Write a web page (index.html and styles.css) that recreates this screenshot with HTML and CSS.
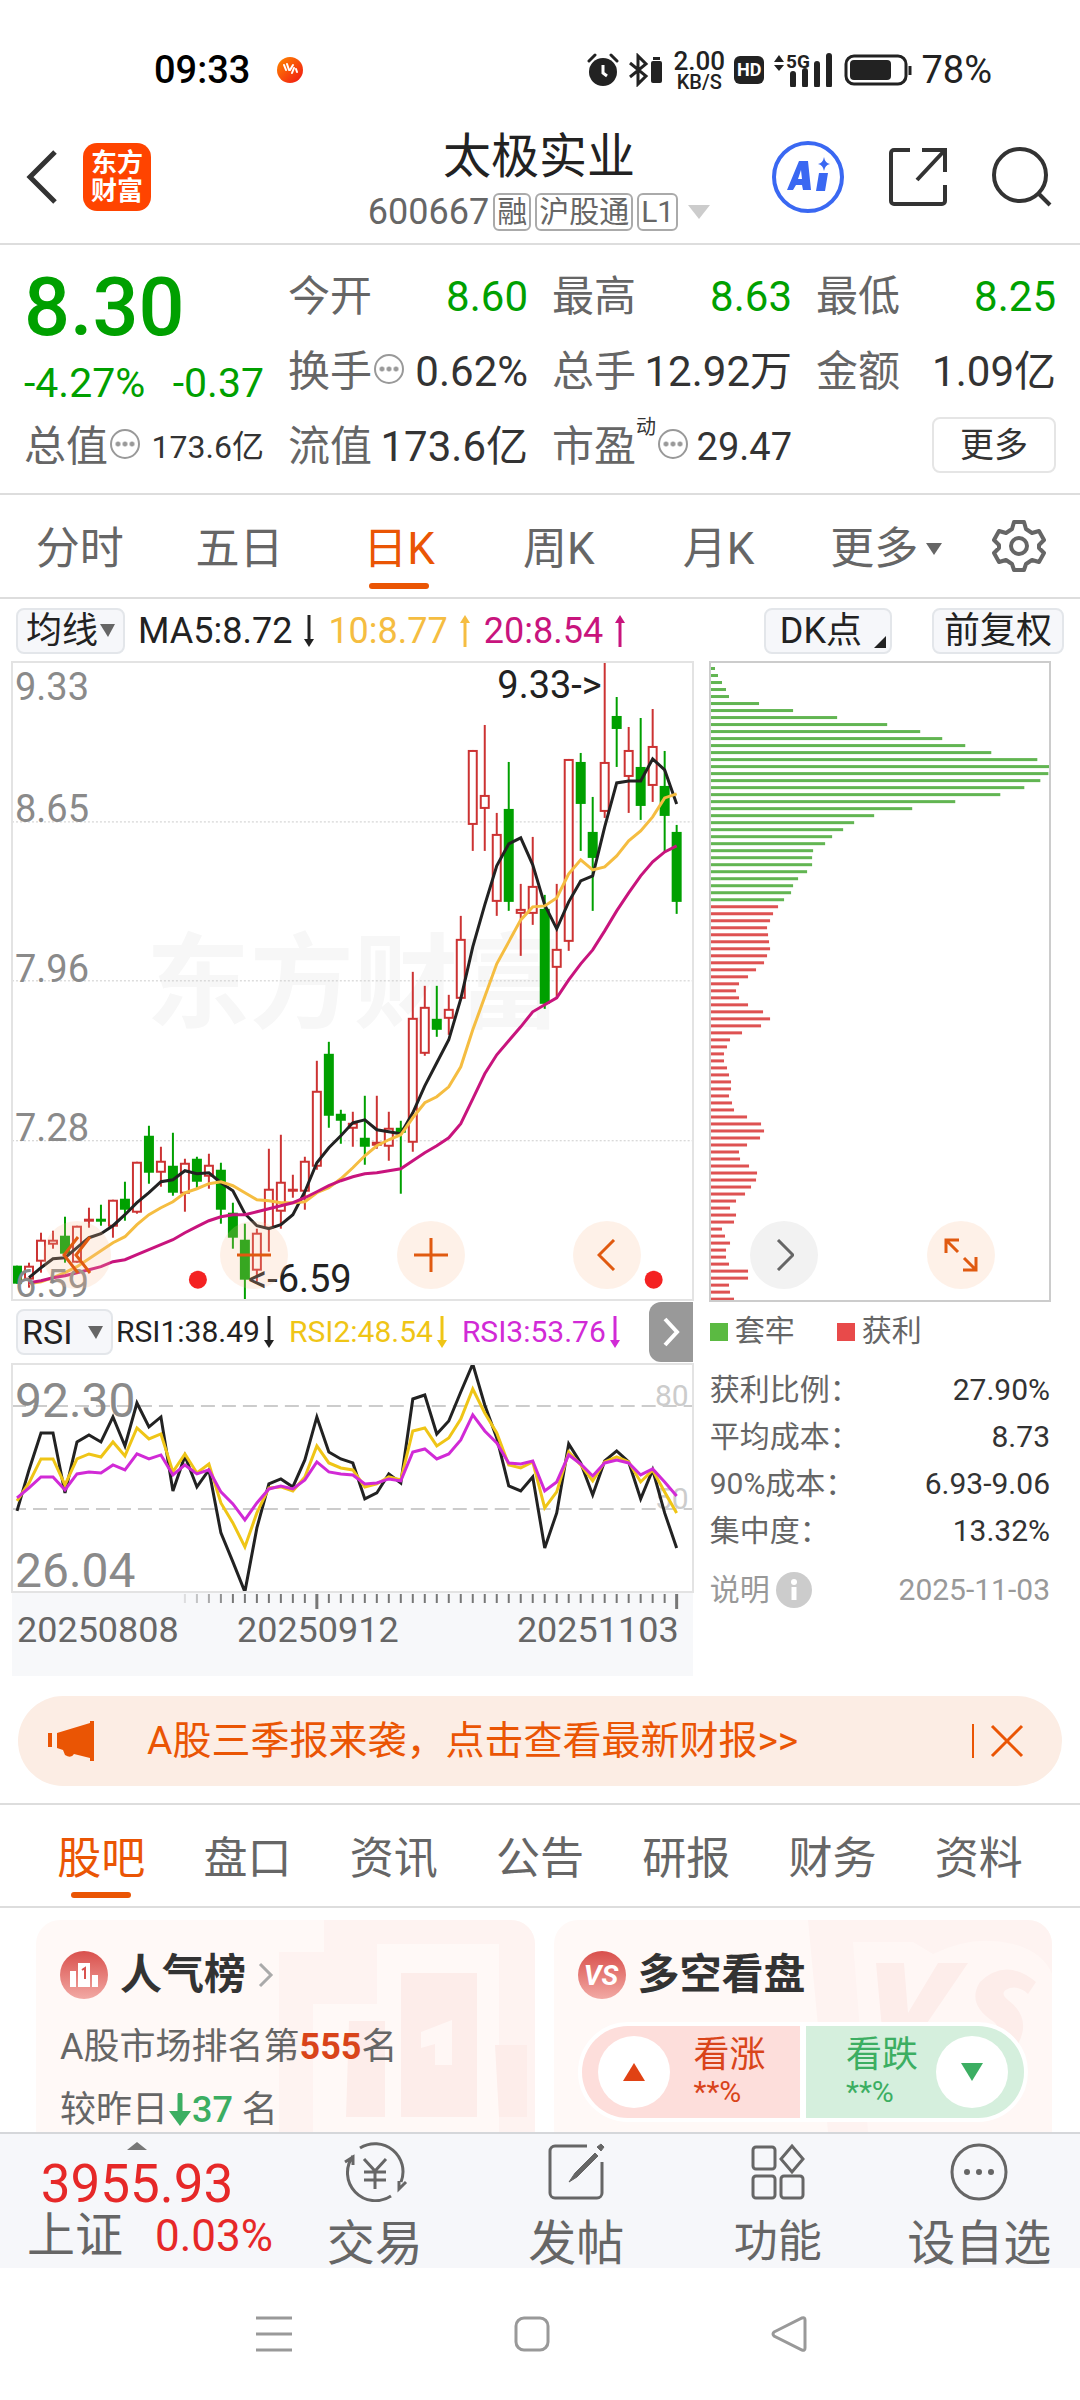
FILE: index.html
```html
<!DOCTYPE html>
<html lang="zh-CN">
<head>
    <meta charset="UTF-8">
    <meta name="viewport" content="width=device-width, initial-scale=1.0">
    <title>太极实业 600667</title>
    <link rel="stylesheet" href="styles.css">
</head>
<body>
    <div class="status-bar">
        <span class="clock">09:33</span>
        <svg class="app-dot" width="26" height="26" viewBox="0 0 26 26">
            <defs><linearGradient id="dot" x1="0" y1="0" x2="1" y2="1"><stop offset="0" stop-color="#ff8a00"/><stop offset="1" stop-color="#f01414"/></linearGradient></defs>
            <circle cx="13" cy="13" r="13" fill="url(#dot)"/>
            <path d="M7 8l2 5M10 7l2 6M13 13l3-5M15 16l2-5M19 12l1 3" stroke="#fff" stroke-width="2" stroke-linecap="round"/>
        </svg>
        <div class="status-icons">
            <svg width="32" height="34" viewBox="0 0 32 34">
                <circle cx="16" cy="19" r="14" fill="#222"/>
                <path d="M2 8l6-6M30 8l-6-6" stroke="#222" stroke-width="3" stroke-linecap="round"/>
                <path d="M16 12v8l4 3" stroke="#fff" stroke-width="3" fill="none"/>
            </svg>
            <svg width="36" height="34" viewBox="0 0 36 34">
                <path d="M2 10l16 13-8 8V3l8 8L2 24" stroke="#222" stroke-width="3" fill="none"/>
                <rect x="23" y="8" width="11" height="22" rx="2" fill="#222"/>
                <rect x="25" y="4" width="7" height="3" fill="#222"/>
            </svg>
            <span class="speed"><b>2.00</b><b class="unit">KB/S</b></span>
            <span class="hd">HD</span>
            <svg class="signal" width="62" height="34" viewBox="0 0 62 34">
                <path d="M1 9l5-7 5 7zM1 12l5 6 5-6z" fill="#222"/>
                <text x="13" y="15" font-size="19" font-weight="700" fill="#222">5G</text>
                <path d="M20 21v11M32 18v14M44 11v21M56 3v29" stroke="#222" stroke-width="6" stroke-linecap="round"/>
            </svg>
            <svg width="68" height="32" viewBox="0 0 68 32">
                <rect x="2" y="2" width="60" height="28" rx="8" fill="none" stroke="#222" stroke-width="3"/>
                <rect x="6" y="6" width="41" height="20" rx="4" fill="#222"/>
                <path d="M66 12v9" stroke="#222" stroke-width="3"/>
            </svg>
            <span class="percent">78%</span>
        </div>
    </div>

    <header class="header">
        <div class="header-left">
            <button class="icon-btn" aria-label="返回">
                <svg width="32" height="56" viewBox="0 0 32 56"><path d="M29 3L4 28l25 25" fill="none" stroke="#333" stroke-width="5"/></svg>
            </button>
            <a class="logo" href="#">东方<br>财富</a>
        </div>
        <div class="stock">
            <h1>太极实业</h1>
            <div class="stock-sub">
                <span>600667</span><span class="tag">融</span><span class="tag">沪股通</span><span class="tag">L1</span>
                <svg width="22" height="16" viewBox="0 0 22 16"><path d="M0 1h22L11 15z" fill="#ccc"/></svg>
            </div>
        </div>
        <div class="header-right">
            <button class="icon-btn" aria-label="AI">
                <svg width="72" height="74" viewBox="0 0 72 74">
                    <circle cx="36" cy="37" r="34" fill="none" stroke="#3a68f2" stroke-width="4"/>
                    <path d="M15 50L27 21h9l3 29h-8l-1-5h-6l-3 5zM26 39h4l-1-9zM47 33h9l-3 18h-9z" fill="#3a68f2" fill-rule="evenodd"/>
                    <path d="M52 17q1 6 6 7q-5 1-6 7q-1-6-6-7q5-1 6-7z" fill="#3a68f2"/>
                </svg>
            </button>
            <button class="icon-btn" aria-label="分享">
                <svg width="60" height="60" viewBox="0 0 60 60" fill="none" stroke="#333" stroke-width="4">
                    <path d="M22 3H6a3 3 0 0 0-3 3v48a3 3 0 0 0 3 3h48a3 3 0 0 0 3-3V38M34 3h23v22M57 3L29 33"/>
                </svg>
            </button>
            <button class="icon-btn" aria-label="搜索">
                <svg width="60" height="60" viewBox="0 0 60 60" fill="none" stroke="#333" stroke-width="4">
                    <circle cx="28" cy="28" r="26"/><path d="M46 46l12 12"/>
                </svg>
            </button>
        </div>
    </header>

    <section class="quote">
        <div class="quote-col">
            <div class="price">8.30</div>
            <div class="change"><span>-4.27%</span><span>-0.37</span></div>
            <div class="stat"><span class="label">总值</span><i class="more-dot"></i><span class="value small">173.6亿</span></div>
        </div>
        <div class="quote-col">
            <div class="stat"><span class="label">今开</span><span class="value down">8.60</span></div>
            <div class="stat"><span class="label">换手</span><i class="more-dot"></i><span class="value">0.62%</span></div>
            <div class="stat"><span class="label">流值</span><span class="value">173.6亿</span></div>
        </div>
        <div class="quote-col">
            <div class="stat"><span class="label">最高</span><span class="value down">8.63</span></div>
            <div class="stat"><span class="label">总手</span><span class="value">12.92万</span></div>
            <div class="stat"><span class="label">市盈</span><span class="sup">动</span><i class="more-dot"></i><span class="value medium">29.47</span></div>
        </div>
        <div class="quote-col">
            <div class="stat"><span class="label">最低</span><span class="value down">8.25</span></div>
            <div class="stat"><span class="label">金额</span><span class="value">1.09亿</span></div>
            <div class="stat"><button class="more-btn">更多</button></div>
        </div>
    </section>

    <nav class="tabs period">
        <a href="#">分时</a>
        <a href="#">五日</a>
        <a href="#" class="active">日K</a>
        <a href="#">周K</a>
        <a href="#">月K</a>
        <a href="#" class="more">更多<svg width="16" height="14" viewBox="0 0 16 14"><path d="M0 1h16L8 13z" fill="#666"/></svg></a>
        <button class="icon-btn gear" aria-label="设置">
            <svg width="54" height="54" viewBox="0 0 54 54" fill="none" stroke="#666" stroke-width="4" stroke-linejoin="round">
                <path d="M22 3h10l2 7 6 4 7-2 5 9-5 5v3l5 5-5 9-7-2-6 4-2 6H22l-2-6-6-4-7 2-5-9 5-5v-3l-5-5 5-9 7 2 6-4z"/>
                <circle cx="27" cy="27" r="8"/>
            </svg>
        </button>
    </nav>

    <div class="ma-bar">
        <button class="chip">均线<svg width="15" height="13" viewBox="0 0 15 13"><path d="M0 0h15L8 13z" fill="#666"/></svg></button>
        <span class="ma c-black">MA5:8.72<svg class="arrow"><use href="#arrow-down"/></svg></span>
        <span class="ma c-yellow">10:8.77<svg class="arrow"><use href="#arrow-up"/></svg></span>
        <span class="ma c-purple">20:8.54<svg class="arrow"><use href="#arrow-up"/></svg></span>
        <button class="chip dk">DK点<svg width="12" height="12" viewBox="0 0 12 12"><path d="M12 0v12H0z" fill="#222"/></svg></button>
        <button class="chip fq">前复权</button>
    </div>

    <div class="plots">
        <svg id="kline" class="plot" viewBox="0 0 681 638">
            <text class="watermark" x="134" y="358">东方财富</text>
            <g class="grid-dot"><path d="M0 160h681M0 319h681M0 479h681"/></g>
            <g id="candles"></g>
            <g id="averages"></g>
            <circle cx="186" cy="618" r="9" fill="#f42222"/>
            <circle cx="642" cy="618" r="9" fill="#f42222"/>
            <g class="scale">
                <text x="3" y="38">9.33</text>
                <text x="3" y="160">8.65</text>
                <text x="3" y="320">7.96</text>
                <text x="3" y="479">7.28</text>
                <text x="3" y="635">6.59</text>
            </g>
            <g class="mark">
                <text x="590" y="36" text-anchor="end">9.33-&gt;</text>
                <text x="236" y="630">&lt;-6.59</text>
            </g>
        </svg>
        <svg id="cost" class="plot cost" viewBox="0 0 340 638"></svg>
        <div class="plot-tools">
            <button aria-label="最左"><svg width="34" height="40" viewBox="0 0 34 40"><path d="M18 2L4 20l14 18M30 2L16 20l14 18"/></svg></button>
            <button aria-label="缩小"><svg width="34" height="34" viewBox="0 0 34 34"><path d="M0 17h34"/></svg></button>
            <button aria-label="放大"><svg width="34" height="34" viewBox="0 0 34 34"><path d="M0 17h34M17 0v34"/></svg></button>
            <button aria-label="左移"><svg width="20" height="32" viewBox="0 0 20 32"><path d="M17 1L2 16l15 15"/></svg></button>
            <button class="gray" aria-label="右移"><svg width="20" height="32" viewBox="0 0 20 32"><path d="M4 1l15 15L4 31"/></svg></button>
            <button aria-label="全屏"><svg width="34" height="34" viewBox="0 0 34 34"><path d="M2 15V2h13M2 2l12 12M32 19v13H19M32 32L20 20"/></svg></button>
        </div>
    </div>

    <div class="details">
        <div class="rsi">
            <div class="rsi-bar">
                <button class="chip">RSI<svg width="15" height="13" viewBox="0 0 15 13"><path d="M0 0h15L8 13z" fill="#666"/></svg></button>
                <span class="rsi-val c-black">RSI1:38.49<svg class="arrow"><use href="#arrow-down"/></svg></span>
                <span class="rsi-val c-gold">RSI2:48.54<svg class="arrow"><use href="#arrow-down"/></svg></span>
                <span class="rsi-val c-violet">RSI3:53.76<svg class="arrow"><use href="#arrow-down"/></svg></span>
                <button class="rsi-next" aria-label="下一个"><svg width="18" height="30" viewBox="0 0 18 30"><path d="M3 2l12 13L3 28" fill="none" stroke="#fff" stroke-width="4"/></svg></button>
            </div>
            <svg class="plot" viewBox="0 0 681 228">
                <path class="grid-dash" d="M0 42h681M0 145h681"/>
                <g class="level">
                    <text x="677" y="42" text-anchor="end">80</text>
                    <text x="677" y="145" text-anchor="end">50</text>
                </g>
                <g class="rsi-scale">
                    <text x="3" y="53">92.30</text>
                    <text x="3" y="223">26.04</text>
                </g>
                <g id="rsi-lines"></g>
            </svg>
            <svg class="axis" viewBox="0 0 681 84">
                <g id="ticks"></g>
                <text x="5" y="49">20250808</text>
                <text x="306" y="49" text-anchor="middle">20250912</text>
                <text x="667" y="49" text-anchor="end">20251103</text>
            </svg>
        </div>
        <div class="cost-info">
            <div class="legend"><span class="lost">套牢</span><span class="gain">获利</span></div>
            <dl>
                <div><dt>获利比例：</dt><dd>27.90%</dd></div>
                <div><dt>平均成本：</dt><dd>8.73</dd></div>
                <div><dt>90%成本：</dt><dd>6.93-9.06</dd></div>
                <div><dt>集中度：</dt><dd>13.32%</dd></div>
            </dl>
            <div class="note">
                <span>说明</span>
                <svg width="36" height="36" viewBox="0 0 36 36"><circle cx="18" cy="18" r="18" fill="#ccc"/><path d="M18 15v13" stroke="#fff" stroke-width="5"/><circle cx="18" cy="10" r="3" fill="#fff"/></svg>
                <time>2025-11-03</time>
            </div>
        </div>
    </div>

    <div class="banner">
        <svg width="48" height="40" viewBox="0 0 48 40"><path d="M0 12h4v14H0zM9 12L42 2V0h4v40h-4v-3l-16-4q-3 5-9 1l-2-5-6-2z" fill="#ea5504"/></svg>
        <a href="#">A股三季报来袭，点击查看最新财报&gt;&gt;</a>
        <button class="icon-btn close" aria-label="关闭"><svg width="34" height="34" viewBox="0 0 34 34"><path d="M2 2l30 30M32 2L2 32" stroke="#ea5504" stroke-width="3"/></svg></button>
    </div>

    <nav class="tabs sections">
        <a href="#" class="active">股吧</a>
        <a href="#">盘口</a>
        <a href="#">资讯</a>
        <a href="#">公告</a>
        <a href="#">研报</a>
        <a href="#">财务</a>
        <a href="#">资料</a>
    </nav>

    <main class="cards">
        <section class="card">
            <svg class="card-bg" width="256" height="212" viewBox="0 0 256 212">
                <path d="M45 0h211v212H0V32h45z" fill="#fef3f1"/>
                <path d="M34 84h64V24h122v188H34z" fill="#fff9f7"/>
                <path d="M122 53h76v144h-76zM70 101h36v96H67zM216 125h32v72h-28z" fill="#fdedea"/>
                <path d="M142 112l31-12v45h-17v-21l-14 4z" fill="#fff7f5"/>
            </svg>
            <h2>
                <svg width="48" height="48" viewBox="0 0 48 48"><use href="#red-circle"/><path d="M10 20h6v16h-6zM18 12h12v24H18zM32 24h6v12h-6z" fill="#fff"/><path d="M22 19l3-2v11" stroke="#d9534f" stroke-width="2" fill="none"/></svg>
                人气榜
                <svg width="16" height="26" viewBox="0 0 16 26"><path d="M2 2l11 11L2 24" fill="none" stroke="#aaa" stroke-width="3"/></svg>
            </h2>
            <p class="rank">A股市场排名第<b class="hot">555</b>名</p>
            <p class="rank">较昨日<svg width="24" height="34" viewBox="0 0 24 34"><path d="M12 2v20" stroke="#3cae62" stroke-width="5" stroke-linecap="round"/><path d="M1 18h22L12 33z" fill="#3cae62"/></svg><b class="fall">37</b> 名</p>
        </section>
        <section class="card">
            <svg class="card-bg" width="244" height="212" viewBox="0 0 244 212">
                <path d="M0 0h244v212H20z" fill="#fef3f1"/>
                <path d="M45 22h60l20 12q40-20 80-10 30 8 39 30v158H60z" fill="#fff7f5"/>
                <path d="M68 43h28l4 50 30-50h30l-60 88H76zM228 62q-30-25-56 0-14 22 14 40 10 10-6 14-20 2-34-10l-6 24q50 20 70-6 14-26-10-44-10-8 2-12 10-2 18 6z" fill="#fdedea"/>
            </svg>
            <h2>
                <svg width="48" height="48" viewBox="0 0 48 48"><use href="#red-circle"/><text class="vs" x="23" y="34" text-anchor="middle">VS</text></svg>
                多空看盘
            </h2>
            <div class="vote">
                <button class="vote-up">
                    <span class="ball"><svg width="24" height="20" viewBox="0 0 24 20"><path d="M12 1l11 18H1z" fill="#e04214"/></svg></span>
                    <span>看涨<small>**%</small></span>
                </button>
                <button class="vote-down">
                    <span>看跌<small>**%</small></span>
                    <span class="ball"><svg width="24" height="20" viewBox="0 0 24 20"><path d="M1 1h22L12 19z" fill="#3cae62"/></svg></span>
                </button>
            </div>
        </section>
    </main>

    <footer class="bottom-bar">
        <a class="index" href="#">
            <svg width="20" height="8" viewBox="0 0 20 8"><path d="M10 0l10 8H0z" fill="#777"/></svg>
            <strong>3955.93</strong>
            <span><em>上证</em><b>0.03%</b></span>
        </a>
        <a class="action" href="#">
            <svg width="66" height="60" viewBox="0 0 66 60">
                <path d="M18 6a28 28 0 0 1 41 34M11 14a28 28 0 0 0 38 40M3 20l8-5v8M64 40l-7 7v-8"/>
                <path d="M22 17l11 12 11-12M33 29v18M22 30h22M22 38h22"/>
            </svg>
            <span>交易</span>
        </a>
        <a class="action" href="#">
            <svg width="58" height="60" viewBox="0 0 58 60">
                <path d="M40 4H8a5 5 0 0 0-5 5v42a5 5 0 0 0 5 5h42a5 5 0 0 0 5-5V20"/>
                <path d="M48 11L28 31l-6 9 8-5 21-21zM50 5l4 4 3-4-3-3z" fill="#666" stroke-width="1"/>
            </svg>
            <span>发帖</span>
        </a>
        <a class="action" href="#">
            <svg width="56" height="60" viewBox="0 0 56 60">
                <rect x="3" y="5" width="22" height="22" rx="3"/><rect x="3" y="34" width="22" height="22" rx="3"/><rect x="31" y="34" width="22" height="22" rx="3"/>
                <path d="M42 4l11 13-11 13-11-13z"/>
            </svg>
            <span class="short">功能</span>
        </a>
        <a class="action" href="#">
            <svg width="58" height="60" viewBox="0 0 58 60">
                <circle cx="29" cy="30" r="27"/>
                <g fill="#666" stroke="none"><circle cx="17" cy="30" r="3"/><circle cx="29" cy="30" r="3"/><circle cx="41" cy="30" r="3"/></g>
            </svg>
            <span>设自选</span>
        </a>
    </footer>

    <div class="system-nav">
        <button class="icon-btn" aria-label="任务"><svg width="36" height="36" viewBox="0 0 36 36"><path d="M0 2h36M0 18h36M0 34h36"/></svg></button>
        <button class="icon-btn" aria-label="主页"><svg width="36" height="36" viewBox="0 0 36 36"><rect x="2" y="2" width="32" height="32" rx="8"/></svg></button>
        <button class="icon-btn" aria-label="后退"><svg width="36" height="36" viewBox="0 0 36 36"><path d="M3 16L31 2q3-1 3 2v28q0 3-3 2L3 20q-2-2 0-4z"/></svg></button>
    </div>

    <svg class="defs" width="0" height="0">
        <defs>
            <symbol id="arrow-down" viewBox="0 0 12 32"><path d="M6 0v28" stroke="currentColor" stroke-width="3"/><path d="M1 24h10L6 32z" fill="currentColor"/></symbol>
            <symbol id="arrow-up" viewBox="0 0 12 32"><path d="M6 32V4" stroke="currentColor" stroke-width="3"/><path d="M1 8h10L6 0z" fill="currentColor"/></symbol>
            <linearGradient id="red" x1="0" y1="0" x2="0" y2="1"><stop offset="0" stop-color="#d9504c"/><stop offset="1" stop-color="#f2a9a4"/></linearGradient>
            <symbol id="red-circle" viewBox="0 0 48 48"><circle cx="24" cy="24" r="24" fill="url(#red)"/></symbol>
        </defs>
    </svg>
    <script src="chart.js"></script>
</body>
</html>
```
FILE: styles.css
```css
* {
    box-sizing: border-box;
}
body {
    margin: 0;
    background: #fff;
    color: #333;
    font-family: Roboto, "Noto Sans CJK SC", sans-serif;
    font-size: 36px;
    line-height: 1;
}
a {
    color: inherit;
    text-decoration: none;
}
button {
    font-family: inherit;
    color: inherit;
    line-height: 1;
    padding: 0;
    cursor: pointer;
}
svg {
    display: block;
    flex: none;
}
h1, h2, p, dl, dd {
    margin: 0;
}
.icon-btn {
    background: none;
    border: none;
}
.defs {
    position: absolute;
}

/* status bar */
.status-bar {
    display: flex;
    align-items: center;
    height: 110px;
    padding: 30px 88px 0 154px;
    color: #222;
}
.clock {
    font-size: 38px;
    font-weight: 500;
    color: #000;
}
.app-dot {
    margin-left: 27px;
}
.status-icons {
    display: flex;
    align-items: center;
    gap: 9px;
    margin-left: auto;
}
.speed {
    display: flex;
    flex-direction: column;
    align-items: center;
    font-size: 26px;
}
.speed b {
    font-weight: 500;
    line-height: 24px;
}
.speed .unit {
    font-size: 20px;
    line-height: 18px;
}
.hd {
    padding: 4px 3px;
    border-radius: 6px;
    background: #222;
    color: #fff;
    font-size: 18px;
    font-weight: 700;
    line-height: 20px;
}
.percent {
    font-size: 38px;
}

/* header */
.header {
    display: grid;
    grid-template-columns: 1fr auto 1fr;
    align-items: center;
    height: 135px;
    padding: 0 28px 0 26px;
    border-bottom: 2px solid #ddd;
}
.header-left,
.header-right {
    display: flex;
    align-items: center;
}
.header-left {
    gap: 25px;
}
.header-right {
    justify-content: flex-end;
    gap: 44px;
}
.logo {
    width: 68px;
    height: 68px;
    padding-top: 6px;
    border-radius: 14px;
    background: #ff4400;
    color: #fff;
    font-size: 26px;
    font-weight: 700;
    line-height: 28px;
    text-align: center;
}
.stock {
    padding-top: 6px;
    text-align: center;
}
.stock h1 {
    font-size: 48px;
    font-weight: 400;
    line-height: 60px;
    color: #222;
}
.stock-sub {
    display: flex;
    align-items: center;
    justify-content: center;
    gap: 4px;
    margin-top: 4px;
    color: #666;
    line-height: 42px;
}
.stock-sub svg {
    margin-left: 6px;
}
.tag {
    padding: 0 2px;
    border: 2px solid #aaa;
    border-radius: 6px;
    font-size: 30px;
    line-height: 34px;
}

/* quote */
.quote {
    display: grid;
    grid-template-columns: repeat(4, 1fr);
    gap: 24px;
    padding: 14px 24px 9px;
    border-bottom: 2px solid #ddd;
}
.price {
    color: #00a000;
    font-size: 81px;
    font-weight: 500;
    line-height: 98px;
}
.change {
    display: flex;
    justify-content: space-between;
    color: #00a000;
    font-size: 41px;
    line-height: 52px;
}
.stat {
    display: flex;
    align-items: center;
    height: 75px;
    font-size: 42px;
    line-height: 60px;
}
.label {
    color: #666;
}
.value {
    margin-left: auto;
}
.value.small {
    font-size: 32px;
}
.value.medium {
    font-size: 38px;
}
.value.down {
    color: #00a000;
}
.sup {
    align-self: flex-start;
    font-size: 20px;
    line-height: 36px;
}
.more-dot {
    width: 30px;
    height: 30px;
    margin: 0 0 6px 2px;
    border: 2px solid #999;
    border-radius: 50%;
    background: radial-gradient(circle, #999 2px, transparent 3px) center / 7px 26px repeat-x content-box;
    padding: 0 2px;
}
.more-btn {
    width: 124px;
    height: 56px;
    margin: 0 0 4px auto;
    border: 2px solid #e5e5e5;
    border-radius: 8px;
    background: #fff;
    font-size: 34px;
}

/* tabs */
.tabs {
    display: grid;
    height: 104px;
    border-bottom: 2px solid #ddd;
    color: #666;
    font-size: 44px;
}
.period {
    grid-template-columns: repeat(6, 1fr) 122px;
}
.sections {
    grid-template-columns: repeat(7, 1fr);
    padding: 0 28px;
}
.tabs a {
    position: relative;
    display: flex;
    align-items: center;
    justify-content: center;
    gap: 8px;
    padding-top: 6px;
}
.tabs .more {
    padding-left: 16px;
}
.tabs .active {
    color: #ea5504;
}
.tabs .active::after {
    content: '';
    position: absolute;
    bottom: 8px;
    left: calc(50% - 30px);
    width: 60px;
    height: 6px;
    border-radius: 3px;
    background: #ea5504;
}
.gear {
    display: flex;
    align-items: center;
    justify-content: center;
}

/* average line bar */
.ma-bar {
    display: flex;
    align-items: center;
    height: 63px;
    padding: 0 16px;
}
.chip {
    display: flex;
    align-items: center;
    height: 46px;
    padding: 0 8px;
    border: 2px solid #e3e6ea;
    border-radius: 8px;
    background: #f6f7fa;
    color: #222;
    font-size: 36px;
}
.chip svg {
    margin-left: 2px;
}
.ma,
.rsi-val {
    display: flex;
    align-items: center;
}
.ma {
    margin-left: 13px;
}
.arrow {
    width: 12px;
    height: 32px;
    margin-left: 11px;
}
.dk {
    margin-left: auto;
    margin-right: 40px;
    padding: 0 4px 0 14px;
}
.chip.fq {
    padding: 0 10px;
}
.dk svg {
    align-self: flex-end;
    margin: 0 0 4px 12px;
}
.c-black {
    color: #222;
}
.c-yellow {
    color: #f5bd41;
}
.c-purple {
    color: #c8147d;
}
.c-gold {
    color: #efc516;
}
.c-violet {
    color: #d12ad6;
}

/* charts */
.plots,
.details {
    position: relative;
    display: grid;
    grid-template-columns: 2fr 1fr;
    column-gap: 17px;
    margin: 0 30px 0 12px;
}
.plot,
.axis {
    width: 100%;
    height: auto;
}
.plot {
    outline: 2px solid #e3e3e3;
    outline-offset: -1px;
}
.cost {
    outline-color: #ccc;
}
.watermark {
    fill: #f7f7f7;
    font-size: 104px;
    font-weight: 700;
}
.grid-dot {
    stroke: #ccc;
    stroke-dasharray: 2 2;
}
.grid-dash {
    stroke: #ccc;
    stroke-width: 2;
    stroke-dasharray: 14 7;
}
.scale {
    fill: #8a8a8a;
    font-size: 38px;
}
.mark {
    fill: #222;
    font-size: 38px;
}
.rsi-scale {
    fill: #8a8a8a;
    font-size: 48px;
}
.level {
    fill: #ccc;
    font-size: 30px;
}
.axis {
    margin-top: 1px;
    background: #f7f8fa;
    fill: #666;
    font-size: 36px;
}
.up {
    fill: #fff;
    stroke: #cc3333;
    stroke-width: 2;
}
.fallen {
    fill: #00a000;
    stroke: #00a000;
    stroke-width: 2;
}
.line {
    fill: none;
    stroke-width: 3;
    stroke: currentColor;
}
.plot-tools {
    position: absolute;
    left: 31px;
    right: 55px;
    bottom: 12px;
    display: flex;
    justify-content: space-between;
}
.plot-tools button {
    display: flex;
    align-items: center;
    justify-content: center;
    width: 68px;
    height: 68px;
    border: none;
    border-radius: 50%;
    background: rgba(250, 190, 150, 0.22);
}
.plot-tools svg {
    fill: none;
    stroke: #e05a10;
    stroke-width: 3;
}
.plot-tools .gray {
    background: #f2f2f2;
}
.plot-tools .gray svg {
    stroke: #666;
}
.rsi-bar {
    display: flex;
    align-items: center;
    height: 63px;
    padding-left: 4px;
}
.rsi-bar .chip {
    width: 97px;
    justify-content: space-between;
    padding: 0 8px 0 4px;
    font-size: 34px;
}
.rsi-val {
    margin-left: 3px;
    margin-right: 11px;
    font-size: 30px;
}
.rsi-val .arrow {
    margin-left: 3px;
}
.rsi-next {
    display: flex;
    align-items: center;
    justify-content: center;
    width: 44px;
    height: 60px;
    margin-left: auto;
    border: none;
    border-radius: 12px 0 0 12px;
    background: #999;
}
.cost-info {
    color: #666;
    font-size: 30px;
}
.legend {
    display: flex;
    gap: 42px;
    height: 60px;
    line-height: 60px;
}
.legend span::before {
    content: '';
    display: inline-block;
    width: 18px;
    height: 18px;
    margin-right: 7px;
    background: #5bba42;
}
.legend .gain::before {
    background: #e84a4a;
}
.cost-info dl {
    padding-top: 5px;
}
.cost-info dl div {
    display: flex;
    justify-content: space-between;
    line-height: 47px;
}
.cost-info dd {
    color: #333;
}
.note {
    display: flex;
    align-items: center;
    gap: 6px;
    height: 72px;
    color: #999;
}
.note time {
    margin-left: auto;
}

/* banner */
.banner {
    display: flex;
    align-items: center;
    height: 90px;
    margin: 20px 18px 17px;
    padding: 0 38px 0 30px;
    border-radius: 45px;
    background: #fcede4;
    color: #ea5504;
    font-size: 39px;
}
.banner a {
    margin-left: 51px;
}
.banner .close {
    margin-left: auto;
    padding-left: 16px;
    border-left: 2px solid #ea5504;
}
.tabs.sections {
    border-top: 2px solid #ddd;
    height: 105px;
}

/* cards */
.cards {
    display: grid;
    grid-template-columns: 1fr 1fr;
    gap: 19px;
    padding: 12px 28px 0 36px;
}
.card {
    position: relative;
    height: 212px;
    padding: 29px 24px 0;
    border-radius: 24px 24px 0 0;
    background: #fff9f7;
    overflow: hidden;
}
.card-bg {
    position: absolute;
    top: 0;
    right: 0;
}
.card h2 {
    position: relative;
    display: flex;
    align-items: center;
    gap: 12px;
    font-size: 42px;
    font-weight: 700;
    line-height: 52px;
}
.vs {
    fill: #fff;
    font-size: 28px;
    font-style: italic;
    font-weight: 700;
}
.rank {
    position: relative;
    display: flex;
    align-items: center;
    height: 63px;
    color: #666;
    white-space: pre;
}
.card h2 + .rank {
    margin-top: 14px;
}
.hot {
    color: #d9441a;
}
.fall {
    color: #3cae62;
    font-weight: 500;
}
.vote {
    position: relative;
    display: flex;
    gap: 6px;
    height: 100px;
    margin: 21px 0 0;
    border: 4px solid #fff;
    border-radius: 50px;
    background: #fff;
    overflow: hidden;
}
.vote button {
    display: flex;
    flex: 1;
    align-items: center;
    border: none;
    font-size: 36px;
    text-align: left;
}
.vote small {
    display: block;
    margin-top: 4px;
    font-size: 30px;
}
.vote .vote-up {
    padding-left: 16px;
    gap: 24px;
    background: #fddedb;
    color: #d9441a;
}
.vote .vote-down {
    justify-content: flex-end;
    padding-right: 16px;
    gap: 18px;
    background: #d5efdd;
    color: #3cae62;
}
.ball {
    display: flex;
    align-items: center;
    justify-content: center;
    width: 72px;
    height: 72px;
    border-radius: 50%;
    background: #fff;
}

/* bottom */
.bottom-bar {
    display: flex;
    height: 136px;
    border-top: 2px solid #d5d7da;
    background: #f6f7fa;
    color: #666;
}
.index {
    display: flex;
    flex-direction: column;
    align-items: center;
    width: 274px;
    padding-top: 8px;
    color: #e62828;
}
.index strong {
    margin-top: 6px;
    font-size: 53px;
    font-weight: 400;
    line-height: 56px;
}
.index span {
    display: flex;
    align-items: center;
    gap: 32px;
    padding-left: 26px;
}
.index em {
    color: #666;
    font-size: 48px;
    font-style: normal;
    line-height: 48px;
}
.index b {
    font-size: 44px;
    font-weight: 400;
    line-height: 48px;
}
.action {
    display: flex;
    flex: 1;
    flex-direction: column;
    align-items: center;
    padding-top: 8px;
    font-size: 48px;
    line-height: 84px;
}
.action svg {
    fill: none;
    stroke: #666;
    stroke-width: 3;
}
.action .short {
    font-size: 44px;
    line-height: 80px;
}
.system-nav {
    display: flex;
    justify-content: space-between;
    padding: 48px 273px 48px 256px;
}
.system-nav svg {
    fill: none;
    stroke: #999;
    stroke-width: 3;
}
```
FILE: chart.js
```js
const NS = 'http://www.w3.org/2000/svg';
const STEP = 12;
const FIRST = 5;

// [direction, high, body top, body bottom, low]
const candles = [
    ['g', 604, 604, 622, 622], ['r', 601, 604, 618, 626], ['r', 571, 578, 600, 611], ['r', 569, 578, 583, 587],
    ['g', 555, 574, 592, 601], ['r', 564, 564, 601, 601], ['r', 546, 557, 560, 566], ['g', 543, 557, 559, 564],
    ['r', 538, 538, 565, 576], ['g', 520, 537, 548, 559], ['r', 500, 500, 551, 552], ['g', 464, 474, 511, 522],
    ['r', 485, 499, 511, 525], ['g', 471, 504, 531, 534], ['r', 497, 501, 532, 550], ['g', 495, 497, 520, 526],
    ['r', 492, 503, 515, 527], ['g', 501, 508, 548, 562], ['g', 541, 551, 576, 587], ['g', 562, 578, 618, 639],
    ['r', 567, 571, 609, 620], ['r', 487, 527, 567, 590], ['r', 473, 520, 550, 567], ['r', 513, 527, 530, 536],
    ['r', 495, 499, 530, 548], ['r', 399, 429, 505, 508], ['g', 380, 392, 454, 466], ['g', 448, 452, 459, 482],
    ['r', 450, 461, 467, 485], ['g', 434, 476, 485, 503], ['r', 434, 480, 484, 487], ['r', 450, 466, 485, 499],
    ['g', 459, 466, 471, 532], ['r', 310, 356, 481, 490], ['r', 324, 345, 392, 394], ['g', 324, 357, 368, 375],
    ['r', 333, 347, 357, 373], ['r', 254, 277, 337, 337], ['r', 88, 88, 163, 189], ['r', 63, 133, 147, 189],
    ['r', 151, 172, 240, 254], ['g', 100, 147, 240, 249], ['r', 222, 247, 252, 294], ['r', 175, 224, 252, 263],
    ['g', 233, 247, 342, 347], ['r', 222, 287, 306, 337], ['r', 97, 97, 280, 289], ['g', 91, 100, 142, 189],
    ['g', 135, 170, 196, 249], ['r', 0, 100, 150, 156], ['g', 35, 54, 67, 105], ['r', 65, 88, 115, 151],
    ['g', 56, 105, 144, 158], ['r', 47, 84, 124, 140], ['g', 89, 124, 154, 190], ['g', 163, 170, 240, 252]
];

const ma5 = [616, 606, 597, 596, 586, 576, 572, 564, 553, 541, 531, 520, 518, 509, 512, 511, 521, 529, 552, 564, 567, 563, 553, 530, 501, 486, 474, 461, 458, 468, 470, 472, 451, 424, 401, 378, 337, 285, 243, 204, 182, 176, 203, 243, 267, 240, 219, 214, 165, 121, 119, 119, 97, 108, 142];
const ma10 = [622, 620, 616, 611, 605, 597, 589, 581, 575, 563, 553, 546, 540, 531, 527, 522, 520, 524, 531, 538, 539, 541, 541, 540, 531, 526, 517, 506, 494, 484, 478, 473, 456, 441, 435, 425, 405, 368, 335, 302, 280, 258, 245, 244, 236, 212, 198, 208, 205, 194, 179, 169, 155, 136, 132];
const ma20 = [621, 619, 616, 614, 611, 608, 605, 600, 598, 593, 588, 583, 578, 571, 565, 559, 555, 553, 553, 550, 547, 544, 541, 536, 530, 524, 519, 515, 512, 511, 509, 507, 499, 491, 484, 476, 462, 437, 412, 393, 379, 365, 350, 343, 336, 318, 302, 288, 269, 249, 231, 214, 200, 190, 184];

const rsi1 = [147, 106, 69, 69, 129, 78, 71, 78, 53, 82, 39, 63, 53, 127, 92, 123, 106, 169, 198, 228, 164, 120, 115, 123, 96, 53, 88, 95, 99, 135, 129, 110, 119, 35, 31, 70, 57, 28, 0, 41, 74, 122, 127, 113, 184, 149, 80, 99, 131, 97, 87, 98, 135, 106, 149, 184];
const rsi2 = [137, 119, 95, 95, 121, 95, 90, 93, 78, 92, 64, 75, 70, 108, 90, 109, 100, 139, 159, 183, 149, 124, 123, 127, 113, 82, 99, 104, 106, 123, 120, 113, 116, 67, 64, 82, 74, 55, 25, 49, 69, 101, 104, 98, 144, 128, 88, 101, 117, 98, 93, 98, 118, 106, 128, 149];
const rsi3 = [134, 124, 113, 113, 126, 110, 108, 109, 101, 106, 90, 95, 91, 111, 101, 110, 106, 128, 140, 156, 139, 125, 122, 125, 116, 98, 108, 110, 111, 120, 119, 115, 117, 88, 85, 95, 90, 76, 51, 67, 79, 99, 100, 97, 127, 118, 91, 100, 112, 99, 96, 99, 111, 105, 118, 132];

// cost distribution, top price first
const lost = [4, 7, 11, 15, 18, 48, 82, 126, 176, 209, 231, 254, 280, 326, 339, 337, 329, 313, 289, 244, 201, 163, 143, 132, 121, 114, 102, 101, 101, 96, 87, 82, 80, 73];
const gain = [67, 62, 59, 56, 57, 58, 59, 56, 53, 45, 37, 28, 25, 28, 37, 52, 59, 50, 31, 19, 16, 13, 13, 16, 18, 20, 20, 18, 21, 23, 36, 50, 53, 49, 36, 28, 29, 38, 46, 45, 40, 34, 25, 19, 25, 23, 11, 14, 19, 15, 15, 18, 37, 37, 18, 19, 23];

function add(parent, tag, attrs) {
    const el = document.createElementNS(NS, tag);
    for (const key in attrs) {
        el.setAttribute(key, attrs[key]);
    }
    parent.appendChild(el);
    return el;
}

function drawLine(parent, values, start, color) {
    const points = values.map((y, i) => `${FIRST + (start + i) * STEP},${y}`).join(' ');
    add(parent, 'polyline', { points, class: `line ${color}` });
}

const candleGroup = document.getElementById('candles');
candles.forEach(([dir, high, top, bottom, low], i) => {
    const x = FIRST + i * STEP;
    const g = add(candleGroup, 'g', { class: dir === 'r' ? 'up' : 'fallen' });
    add(g, 'path', { d: `M${x} ${high}V${low}` });
    add(g, 'rect', { x: x - 4, y: top + 1, width: 8, height: Math.max(bottom - top - 2, 1) });
});

const averages = document.getElementById('averages');
drawLine(averages, ma5, 1, 'c-black');
drawLine(averages, ma10, 1, 'c-yellow');
drawLine(averages, ma20, 1, 'c-purple');

const rsiLines = document.getElementById('rsi-lines');
drawLine(rsiLines, rsi1, 0, 'c-black');
drawLine(rsiLines, rsi2, 0, 'c-gold');
drawLine(rsiLines, rsi3, 0, 'c-violet');

const cost = document.getElementById('cost');
lost.concat(gain).forEach((width, i) => {
    add(cost, 'rect', { x: 1, y: 5 + i * 7, width, height: 3, fill: i < lost.length ? '#62b552' : '#de5252' });
});

// one tick a day, a long one under each date
const ticks = document.getElementById('ticks');
for (let i = 14; i < 56; i++) {
    const major = i === 25 || i === 55;
    add(ticks, 'path', {
        d: `M${FIRST + i * STEP} 1v${major ? 15 : 9}`,
        stroke: '#777',
        'stroke-width': major ? 3 : 2,
        opacity: Math.min(1, (i - 13) / 5)
    });
}
```
